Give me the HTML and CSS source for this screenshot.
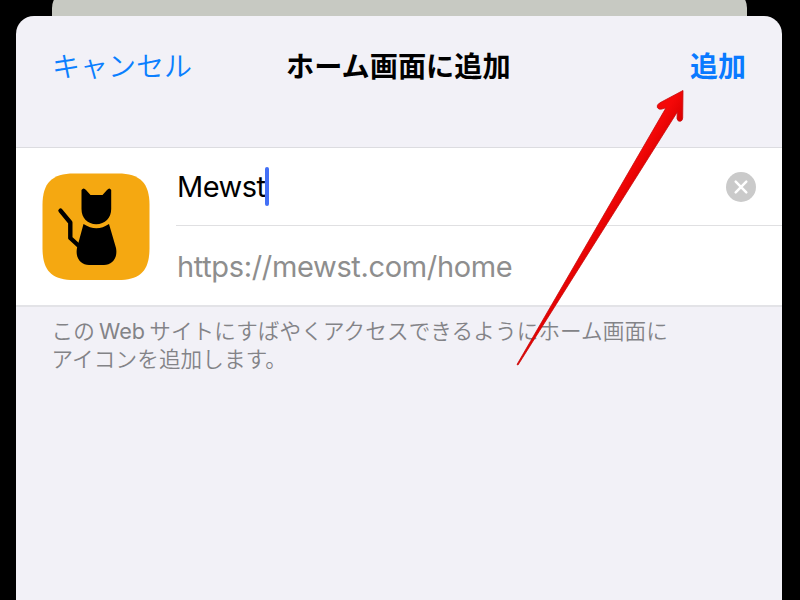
FILE: index.html
```html
<!DOCTYPE html>
<html lang="ja">
<head>
<meta charset="utf-8">
<title>ホーム画面に追加</title>
<link rel="stylesheet" href="styles.css">
</head>
<body>
<div class="screen">
  <div class="backdrop"></div>
  <main class="sheet">
    <header class="bar">
      <a class="cancel">キャンセル</a>
      <h1 class="title">ホーム画面に追加</h1>
      <a class="add">追加</a>
    </header>
    <section class="card">
      <svg class="app-icon" viewBox="0 0 108 108">
        <path fill="#f5a811" d="M32 .5H76C98 .5 107.500 10 107.500 32V75C107.500 98 98 107 76 107H32C10 107 .5 98 .5 75V32C.5 10 10 .5 32 .5Z"/>
        <path d="M39.500 17Q41.500 14 44 17L48.500 22H60.500L65 17Q67.500 14 69.200 17V36C69.200 45 63 51.200 54.300 51.200S39.500 45 39.500 36Z"/>
        <path d="M41.500 51Q54.500 59.500 67 51L74 75C76 85 70 92 62 92H47C39 92 33 85 35 75Z"/>
        <path d="M18.500 37.700L28.300 49.500V65L37 73" fill="none" stroke="#000" stroke-width="4.400" stroke-linecap="round" stroke-linejoin="round"/>
      </svg>
      <div class="fields">
        <div class="field name"><span class="value">Mewst</span><i class="caret"></i>
          <svg class="clear" viewBox="0 0 30 30"><circle cx="15" cy="15" r="15" fill="#cacaca"/><path d="M9.700 9.700L20.300 20.300M20.300 9.700L9.700 20.300" stroke="#fff" stroke-width="2.500" stroke-linecap="round"/></svg>
        </div>
        <div class="field url"><span class="address">https://mewst.com/home</span></div>
      </div>
    </section>
    <p class="note">この<span class="latin">Web</span>サイトにすばやくアクセスできるようにホーム画面に<br>アイコンを追加します。</p>
  </main>
  <svg class="arrow" viewBox="0 0 800 600">
    <defs>
      <linearGradient id="red" gradientUnits="userSpaceOnUse" x1="594" y1="223" x2="608" y2="232">
        <stop offset="0" stop-color="#f50808"/><stop offset="1" stop-color="#dc0000"/>
      </linearGradient>
    </defs>
    <path fill="url(#red)" stroke="#c80a0a" stroke-width=".8" stroke-linejoin="round" d="M683 90.500L659.500 103Q656.500 105 657.300 107.500Q658.500 110 662 109L666 107.800L517 364.500L518 365L677.300 112L677 118.500Q677.500 121.500 680.200 121.300Q682.500 121 682.700 118Z"/>
  </svg>
</div>
</body>
</html>
```
FILE: styles.css
```css
* { box-sizing: border-box; }
body {
  margin: 0;
  background: #000;
  font-family: Inter, "Noto Sans CJK JP", sans-serif;
}
.screen {
  position: relative;
  width: 800px;
  height: 600px;
  overflow: hidden;
  background: #000;
}
.backdrop {
  height: 60px;
  margin: -10px 53px 0 52px;
  border-radius: 18px 18px 0 0;
  background: #c7c9c2;
}
.sheet {
  position: relative;
  width: 766px;
  height: 600px;
  margin: -34px 0 0 16px;
  border-radius: 18px 18px 0 0;
  background: #f2f1f7;
}
.bar {
  display: flex;
  align-items: center;
  justify-content: space-between;
  height: 131px;
  padding: 0 36px 29px;
  font-size: 28px;
  line-height: 40px;
  white-space: nowrap;
}
.cancel { width: 196px; color: #0a7fff; font-weight: 350; }
.title {
  flex: 1;
  margin: 0 0 0 38px;
  font-size: 28.200px;
  font-weight: 600;
}
.add { color: #0a7aff; font-weight: 600; }
.card {
  display: flex;
  height: 160px;
  padding-left: 26px;
  border-top: 1px solid #dcdce0;
  border-bottom: 2px solid #e3e3e7;
  background: #fff;
}
.app-icon { width: 108px; height: 108px; margin-top: 25px; }
.fields { flex: 1; margin-left: 26px; }
.field { display: flex; align-items: center; height: 78px; font-size: 29px; letter-spacing: -.35px; }
.name { border-bottom: 1px solid #e0e0e2; }
.value, .address { margin-left: 1px; }
.value { margin-right: -.500px; letter-spacing: -.5px; }
.caret { width: 4px; height: 39px; border-radius: 2px; background: #4370f6; }
.clear { width: 30px; height: 30px; margin: 1px 26px 0 auto; }
.url { color: #8e8e8e; padding-top: 2px; }
.note {
  margin: 10px 0 0 35.500px;
  color: #838387;
  font-size: 21.600px;
  line-height: 28px;
  letter-spacing: .1px;
  font-weight: 350;
  white-space: nowrap;
}
.latin { margin: 0 4px; font-weight: 400; }
.arrow { position: absolute; inset: 0; width: 800px; height: 600px; }
```
